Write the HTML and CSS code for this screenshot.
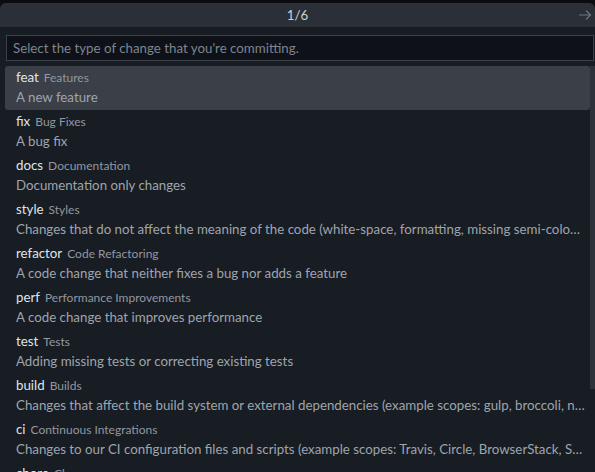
FILE: index.html
```html
<!DOCTYPE html>
<html>
<head>
<meta charset="utf-8">
<link rel="stylesheet" href="styles.css">
</head>
<body>
<div class="widget">
  <div class="titlebar">
    <span class="title">1/6</span>
    <svg class="next" width="16" height="16" viewBox="0 0 16 16"><path d="M2 8h11.5M9 3.5L13.5 8 9 12.5" fill="none" stroke="currentColor" stroke-width="1.1"/></svg>
  </div>
  <div class="inputwrap">
    <div class="input">Select the type of change that you're committing.</div>
  </div>
  <div class="listwrap">
    <div class="list">
      <div class="row selected"><div class="label"><span class="key">feat</span><span class="desc">Features</span></div><div class="detail">A new feature</div></div>
      <div class="row"><div class="label"><span class="key">fix</span><span class="desc">Bug Fixes</span></div><div class="detail">A bug fix</div></div>
      <div class="row"><div class="label"><span class="key">docs</span><span class="desc">Documentation</span></div><div class="detail">Documentation only changes</div></div>
      <div class="row"><div class="label"><span class="key">style</span><span class="desc">Styles</span></div><div class="detail">Changes that do not affect the meaning of the code (white-space, formatting, missing semi-colons, etc)</div></div>
      <div class="row"><div class="label"><span class="key">refactor</span><span class="desc">Code Refactoring</span></div><div class="detail">A code change that neither fixes a bug nor adds a feature</div></div>
      <div class="row"><div class="label"><span class="key">perf</span><span class="desc">Performance Improvements</span></div><div class="detail">A code change that improves performance</div></div>
      <div class="row"><div class="label"><span class="key">test</span><span class="desc">Tests</span></div><div class="detail">Adding missing tests or correcting existing tests</div></div>
      <div class="row"><div class="label"><span class="key">build</span><span class="desc">Builds</span></div><div class="detail">Changes that affect the build system or external dependencies (example scopes: gulp, broccoli, npm)</div></div>
      <div class="row"><div class="label"><span class="key">ci</span><span class="desc">Continuous Integrations</span></div><div class="detail">Changes to our CI configuration files and scripts (example scopes: Travis, Circle, BrowserStack, SauceLabs)</div></div>
      <div class="row"><div class="label"><span class="key">chore</span><span class="desc">Chores</span></div><div class="detail">Other changes that don't modify src or test files</div></div>
    </div>
    <div class="scrollbar"></div>
  </div>
</div>
</body>
</html>
```

FILE: styles.css
```css
html, body {
  margin: 0;
  padding: 0;
  background: #0a0c10;
  height: 100%;
  overflow: hidden;
}
body {
  padding-top: 3px;
  box-sizing: border-box;
  font-family: Lato, "Noto Sans", sans-serif;
  font-size: 13.3px;
}
.widget {
  background: #181c23;
  border-radius: 6px 6px 0 0;
  height: 100%;
  overflow: hidden;
}
.titlebar {
  height: 24px;
  background: #2b2f37;
  display: flex;
  align-items: center;
  justify-content: center;
  position: relative;
}
.title {
  color: #c9d1d9;
  font-size: 13.3px;
}
.next {
  position: absolute;
  right: 2px;
  top: 4px;
  color: #6e7681;
}
.inputwrap {
  padding: 8px 1px 5px 6px;
}
.input {
  height: 26px;
  box-sizing: border-box;
  background: #0e1117;
  border: 1px solid #3b4048;
  color: #7d8590;
  padding: 0 6px;
  line-height: 24px;
  font-size: 13.3px;
  white-space: nowrap;
  overflow: hidden;
}
.listwrap {
  position: relative;
  padding: 0 0 0 5px;
}
.row {
  height: 44px;
  box-sizing: border-box;
  padding: 1px 5px 0 11px;
  margin-right: 5px;
  border-radius: 3px;
}
.row.selected {
  background: #3a3f48;
}
.label {
  height: 20px;
  line-height: 20px;
  white-space: nowrap;
}
.key {
  color: #dfe5eb;
  font-size: 13.3px;
}
.desc {
  color: #9198a1;
  font-size: 12px;
  margin-left: 5px;
}
.detail {
  color: #9ea5ad;
  font-size: 13.3px;
  line-height: 20px;
  white-space: nowrap;
  overflow: hidden;
  text-overflow: ellipsis;
}
.scrollbar {
  position: absolute;
  right: 0;
  top: 0;
  width: 5px;
  height: 323px;
  background: rgba(110, 118, 129, 0.25);
}
```
